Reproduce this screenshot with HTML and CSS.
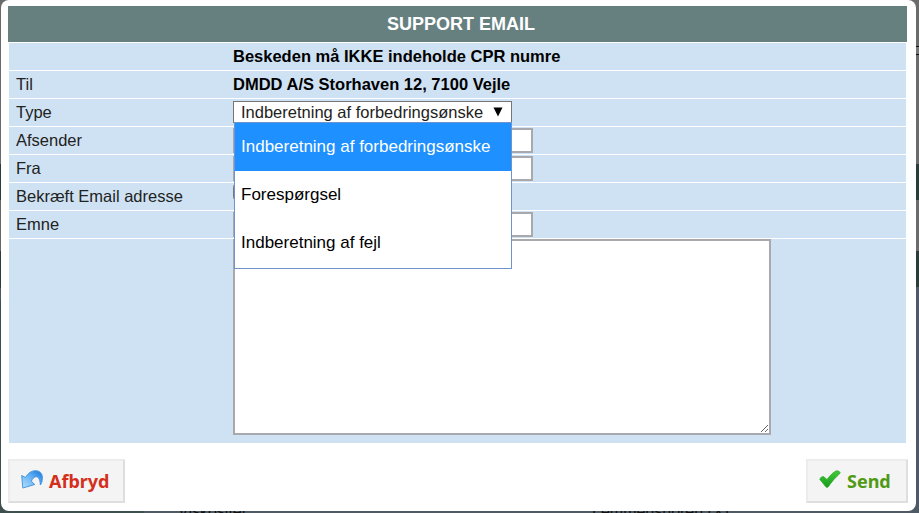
FILE: index.html
```html
<!DOCTYPE html>
<html lang="da">
<head>
    <meta charset="UTF-8">
    <meta name="viewport" content="width=device-width, initial-scale=1.0">
    <title>Support Email</title>
    <link rel="stylesheet" href="styles.css">
</head>
<body>
    <div class="backdrop">
        <div class="backdrop-right"></div>
        <span class="backdrop-text text-left">Viskositet</span>
        <span class="backdrop-text text-right">Lemmerisnoren (X)</span>
    </div>

    <form class="dialog">
        <h1>SUPPORT EMAIL</h1>
        <div class="rows">
            <div class="row">
                <span></span>
                <strong>Beskeden må IKKE indeholde CPR numre</strong>
            </div>
            <div class="row">
                <span>Til</span>
                <strong>DMDD A/S Storhaven 12, 7100 Vejle</strong>
            </div>
            <div class="row">
                <span>Type</span>
                <div class="select">
                    <div class="select-value">Indberetning af forbedringsønske
                        <svg width="10" height="10" viewBox="0 0 10 10"><path d="M0.500 0.500h9L5 9.500z" fill="#000"/></svg>
                    </div>
                    <ul class="select-list">
                        <li class="selected">Indberetning af forbedringsønske</li>
                        <li>Forespørgsel</li>
                        <li>Indberetning af fejl</li>
                    </ul>
                </div>
            </div>
            <div class="row">
                <label for="afsender">Afsender</label>
                <input type="text" id="afsender">
            </div>
            <div class="row">
                <label for="fra">Fra</label>
                <input type="text" id="fra">
            </div>
            <div class="row">
                <label for="bekraeft">Bekræft Email adresse</label>
                <input type="checkbox" id="bekraeft">
            </div>
            <div class="row">
                <label for="emne">Emne</label>
                <input type="text" id="emne">
            </div>
            <div class="row message">
                <span></span>
                <textarea></textarea>
            </div>
        </div>
        <div class="buttons">
            <button type="button" class="btn cancel">
                <svg width="22" height="20" viewBox="0 0 22 20">
                    <defs>
                        <linearGradient id="undo" x1="0" y1="1" x2="1" y2="0">
                            <stop offset="0" stop-color="#b5e2ff"/>
                            <stop offset="0.5" stop-color="#6bb5f5"/>
                            <stop offset="1" stop-color="#1478dc"/>
                        </linearGradient>
                    </defs>
                    <path d="M0.700 5.500L4.500 7.500C7 3 10.500 0.700 14.500 0.700C19.500 0.700 22 4.500 21.300 9.500C21 12 20.300 14 19.300 15C19.300 11 18 7 15.500 6.700C13.300 6.500 11.500 8.500 10.300 11.300L13.800 14.500L1.800 18Z" fill="url(#undo)" stroke="#3a8fdc" stroke-width="0.9" stroke-linejoin="round"/>
                </svg>
                Afbryd
            </button>
            <button type="button" class="btn send">
                <svg width="22" height="20" viewBox="0 0 22 20">
                    <defs>
                        <linearGradient id="check" x1="0" y1="0" x2="0" y2="1">
                            <stop offset="0" stop-color="#45c93c"/>
                            <stop offset="1" stop-color="#169b1a"/>
                        </linearGradient>
                    </defs>
                    <path d="M0.700 9.200Q2 6.200 4.500 6.500L8 9.500C11 5.500 14.500 1.800 17.500 0.800Q20.500 0.600 21.300 3C17 7 12.500 12 9.300 16.800Q8 18 6.800 16.800C5 14.500 3 12 0.700 9.200Z" fill="url(#check)" stroke="#27a626" stroke-width="0.7" stroke-linejoin="round"/>
                </svg>
                Send
            </button>
        </div>
    </form>
</body>
</html>
```
FILE: styles.css
```css
* {
    box-sizing: border-box;
}
body {
    margin: 0;
    height: 513px;
    overflow: hidden;
    font-family: "Liberation Sans", Arial, sans-serif;
    font-size: 16.5px;
    color: #222;
    background: #4c575e;
}

/* dimmed page behind the dialog */
.backdrop {
    position: absolute;
    top: 0;
    left: 0;
    width: 919px;
    height: 513px;
    overflow: hidden;
    background: linear-gradient(to right, #3e504d 144px, #4f5a62 144px);
}
.backdrop::before {
    content: "";
    position: absolute;
    top: 0;
    left: 0;
    width: 10px;
    height: 300px;
    background: linear-gradient(#6a6a6a 164px, #2c3c39 164px 200px, #6a6465 200px 251px, #2c3c39 251px 288px, #4c575e 288px);
}
.backdrop-right {
    position: absolute;
    top: 0;
    right: 0;
    width: 12px;
    height: 513px;
    background: linear-gradient(#6b6b6b 46px, #111 46px 47px, #777 47px 54px, #111 54px 55px, #6b6b6b 55px 164px, #2c3c39 164px 200px, #6b6b6b 200px 251px, #2c3c39 251px 287px, #4f5a66 287px);
}
.backdrop-text {
    position: absolute;
    top: 504px;
    color: #111;
    font-size: 16px;
    line-height: 16px;
}
.text-left {
    left: 178px;
}
.text-right {
    left: 592px;
}

.dialog {
    position: relative;
    width: 915px;
    height: 511px;
    margin-left: 1px;
    padding: 6px 8px 8px 7px;
    background: #fff;
    border-radius: 8px;
}
h1 {
    width: 899px;
    height: 36px;
    margin: 0 0 1px;
    padding-left: 7px;
    background: #668080;
    color: #fff;
    font-size: 18px;
    line-height: 36px;
    text-align: center;
}
.rows {
    display: flex;
    flex-direction: column;
    gap: 1px;
    width: 897px;
    margin-left: 1px;
}
.row {
    display: grid;
    grid-template-columns: 217px 1fr;
    align-items: start;
    height: 27px;
    padding-left: 7px;
    background: #cfe2f3;
    line-height: 27px;
}
.row strong {
    color: #000;
}
.row input[type="text"] {
    width: 300px;
    height: 25px;
    margin: 1px 0 0;
    border: 2px solid #a9a9ad;
    background: #fff;
}
.row input[type="checkbox"] {
    justify-self: start;
    width: 16px;
    height: 16px;
    margin: 1px 0 0;
}
.message {
    height: 204px;
}
.message textarea {
    width: 538px;
    height: 196px;
    margin: 0;
    border: 2px solid #a9a9ad;
    background: #fff;
}

.select {
    position: relative;
    width: 279px;
    margin-top: 2px;
}
.select-value {
    display: flex;
    align-items: center;
    gap: 10px;
    height: 22px;
    padding-left: 7px;
    border: 1px solid #767676;
    background: #fff;
    line-height: 21px;
    white-space: nowrap;
}
.select-list {
    position: absolute;
    z-index: 2;
    top: 21px;
    left: 1px;
    width: 278px;
    height: 147px;
    margin: 0;
    padding: 0;
    border: 1px solid #6f94cc;
    background: #fff;
    list-style: none;
}
.select-list li {
    height: 48px;
    padding-left: 6px;
    color: #000;
    font-size: 17px;
    line-height: 47px;
    white-space: nowrap;
}
.select-list .selected {
    background: #1e90ff;
    color: #fff;
}

.buttons {
    display: flex;
    justify-content: space-between;
    width: 900px;
    margin-top: 16px;
}
.btn {
    display: flex;
    align-items: center;
    gap: 6px;
    height: 44px;
    padding: 0 0 0 11px;
    border: 2px solid;
    border-color: #ececec #dedede #dedede #ececec;
    background: #f4f4f4;
    font-family: "Noto Sans", "Open Sans", sans-serif;
    font-size: 18px;
    font-weight: bold;
}
.btn svg {
    margin-top: -3px;
}
.cancel {
    width: 117px;
    color: #d42f1c;
}
.send {
    width: 102px;
    color: #4f9a12;
}
```
